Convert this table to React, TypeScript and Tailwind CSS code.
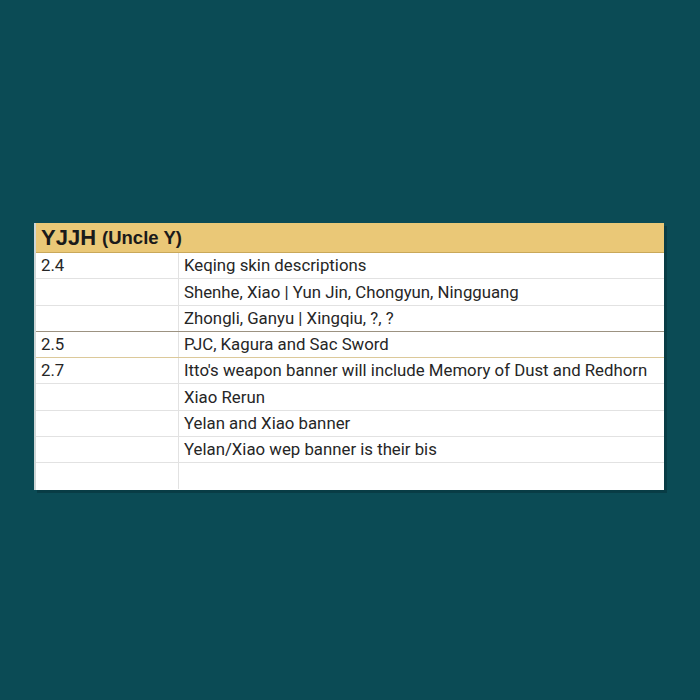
const rows: { ver: string; text: string; line: string }[] = [
  { ver: "2.4", text: "Keqing skin descriptions", line: "border-[#e2e2e2]" },
  { ver: "", text: "Shenhe, Xiao | Yun Jin, Chongyun, Ningguang", line: "border-[#e2e2e2]" },
  { ver: "", text: "Zhongli, Ganyu | Xingqiu, ?, ?", line: "border-[#9c9281]" },
  { ver: "2.5", text: "PJC, Kagura and Sac Sword", line: "border-[#dcc99a]" },
  { ver: "2.7", text: "Itto's weapon banner will include Memory of Dust and Redhorn", line: "border-[#e2e2e2]" },
  { ver: "", text: "Xiao Rerun", line: "border-[#e2e2e2]" },
  { ver: "", text: "Yelan and Xiao banner", line: "border-[#e2e2e2]" },
  { ver: "", text: "Yelan/Xiao wep banner is their bis", line: "border-[#e2e2e2]" },
  { ver: "", text: "", line: "border-transparent" },
];

export default function App() {
  return (
    <div className="w-[700px] h-[700px] bg-[#0b4b55] flex items-start pt-[223px] pl-[34px] font-['Roboto',sans-serif]">
      {/* sheet screenshot */}
      <div className="w-[630px] bg-white border-l-2 border-[#cfd6d6] shadow-[3px_3px_0_#083c45]">
        <div className="h-[30px] bg-[#eac877] border-b border-[#c9a85a] flex items-center pl-[5px] text-[#1a1a1a] font-bold font-['Liberation_Sans',Arial,sans-serif]">
          <span className="text-[22px] leading-none">YJJH</span>
          <span className="text-[18.5px] leading-none ml-[6px] mt-[2px]">(Uncle Y)</span>
        </div>
        {rows.map((r, i) => (
          <div key={i} className={`flex h-[26.3px] border-b ${r.line} text-[16.8px] text-[#262626] leading-none`}>
            <div className="w-[143px] border-r border-[#e2e2e2] flex items-center pl-[5px]">{r.ver}</div>
            <div className="flex-1 flex items-center pl-[5px] whitespace-nowrap">{r.text}</div>
          </div>
        ))}
      </div>
    </div>
  );
}
